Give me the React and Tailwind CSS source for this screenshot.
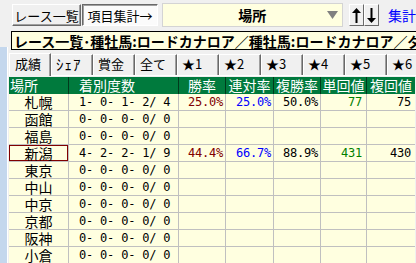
import React from 'react';

const rows = [
  { name: '札幌', rec: '1- 0- 1- 2/ 4', win: '25.0%', ren: '25.0%', fuku: '50.0%', tan: '77', fk: '75' },
  { name: '函館', rec: '0- 0- 0- 0/ 0' },
  { name: '福島', rec: '0- 0- 0- 0/ 0' },
  { name: '新潟', rec: '4- 2- 2- 1/ 9', win: '44.4%', ren: '66.7%', fuku: '88.9%', tan: '431', fk: '430', sel: true },
  { name: '東京', rec: '0- 0- 0- 0/ 0' },
  { name: '中山', rec: '0- 0- 0- 0/ 0' },
  { name: '中京', rec: '0- 0- 0- 0/ 0' },
  { name: '京都', rec: '0- 0- 0- 0/ 0' },
  { name: '阪神', rec: '0- 0- 0- 0/ 0' },
  { name: '小倉', rec: '0- 0- 0- 0/ 0' },
];

const tabs = ['成績', 'ｼｪｱ', '賞金', '全て', '★1', '★2', '★3', '★4', '★5', '★6'];

const mono = "font-['DejaVu_Sans_Mono',monospace] text-[12px] tracking-[-0.2px]";
const cell = 'border-b border-[#c0c0c0] overflow-hidden leading-[16px]';

function Arrow({ up }) {
  return (
    <svg width="9" height="15" viewBox="0 0 9 15">
      {up ? (
        <>
          <polygon points="4.5,0 9,5 0,5" fill="#000" />
          <rect x="3.5" y="4" width="2" height="11" fill="#000" />
        </>
      ) : (
        <>
          <polygon points="4.5,15 9,10 0,10" fill="#000" />
          <rect x="3.5" y="0" width="2" height="11" fill="#000" />
        </>
      )}
    </svg>
  );
}

function App() {
  return (
    <div className="w-[416px] h-[263px] overflow-hidden bg-[#f0f0f0] font-['Noto_Sans_CJK_JP',sans-serif] text-black">
      {/* top toolbar */}
      <div className="flex items-center h-[30px] pl-[12px] whitespace-nowrap">
        <button className="w-[71px] h-[22px] flex items-center justify-center text-[13px] leading-none border border-t-white border-l-white border-b-[#696969] border-r-[#696969] shadow-[inset_-1px_-1px_0_#a0a0a0]">
          レース一覧
        </button>
        <button className="ml-[1px] w-[78px] h-[22px] flex items-center justify-center text-[13px] leading-none bg-[#fbfbfb] border border-t-[#696969] border-l-[#696969] border-b-white border-r-white shadow-[inset_1px_1px_0_#a0a0a0]">
          項目集計→
        </button>
        <div className="ml-[4px] w-[186px] h-[24px] relative flex items-center justify-center bg-[#ffffe0] border border-[#d4d4d4]">
          <span className="text-[14px] font-bold leading-none">場所</span>
          <svg className="absolute right-[4px] top-[7px]" width="11" height="8" viewBox="0 0 11 8">
            <polygon points="0,0 11,0 5.5,8" fill="#808080" />
          </svg>
        </div>
        <button className="ml-[6px] w-[16px] h-[22px] flex items-center justify-center border border-t-white border-l-white border-b-[#696969] border-r-[#696969]">
          <Arrow up />
        </button>
        <button className="w-[15px] h-[22px] flex items-center justify-center border border-t-white border-l-white border-b-[#696969] border-r-[#696969]">
          <Arrow />
        </button>
        <span className="ml-[9px] text-[14px] leading-none text-[#0000ff]">集計</span>
      </div>

      {/* title */}
      <div className="ml-[11px] mt-[1px] h-[19px] flex items-center pl-[2px] bg-[#ffffe0] border border-black border-r-0 whitespace-nowrap overflow-hidden">
        <span className="text-[14px] font-bold leading-none">レース一覧･種牡馬:ロードカナロア／種牡馬:ロードカナロア／ダート</span>
      </div>

      <div className="flex mt-[-3px]">
        <div className="w-[7px] h-[230px] bg-[#c4d7ed]" />
        <div className="w-[2px] bg-[#f0f0f0] border-l border-white" />
        <div className="flex-1 min-w-0">
          {/* tabs */}
          <div className="flex items-end h-[29px] border-b border-white whitespace-nowrap">
            {tabs.map((t, i) => (
              <div
                key={t}
                className={`shrink-0 w-[42px] flex items-center text-[13px] leading-none pb-[3px] border-t border-l border-t-white border-l-white border-r border-r-[#696969] shadow-[inset_-1px_0_0_#a0a0a0] ${i === 0 ? 'h-[23px] pl-[5px] mb-[-1px] bg-[#f0f0f0] relative z-10' : 'h-[21px] pl-[4px]'} ${t === 'ｼｪｱ' ? 'text-[15px] tracking-[1px]' : ''}`}
              >
                {t}
              </div>
            ))}
          </div>

          {/* table */}
          <div className="mt-[1px] w-[406px]">
            <div className="grid grid-cols-[60px_110px_47px_48px_47px_46px_48px] h-[17px] bg-[#007a3d] text-white text-[14px] leading-[17px] whitespace-nowrap">
              <div className="border-r border-[#003a1c] pl-[1px]">場所</div>
              <div className="border-r border-[#003a1c] pl-[10px]">着別度数</div>
              <div className="border-r border-[#003a1c] text-center">勝率</div>
              <div className="border-r border-[#003a1c] text-center">連対率</div>
              <div className="border-r border-[#003a1c] text-center">複勝率</div>
              <div className="border-r border-[#003a1c] text-center">単回値</div>
              <div className="text-center">複回値</div>
            </div>
            {rows.map((r) => (
              <div key={r.name} className="grid grid-cols-[60px_110px_47px_48px_47px_46px_48px] h-[17px] bg-[#ffffe0] whitespace-pre">
                <div className={`${cell} border-r text-center text-[14px] ${r.sel ? 'shadow-[inset_0_0_0_1px_#800000]' : ''}`}>{r.name}</div>
                <div className={`${cell} border-r pl-[10px] ${mono}`}>{r.rec}</div>
                <div className={`${cell} border-r text-right pr-[2px] text-[#800000] ${mono}`}>{r.win || ''}</div>
                <div className={`${cell} border-r text-right pr-[2px] text-[#0000ff] ${mono}`}>{r.ren || ''}</div>
                <div className={`${cell} border-r text-right pr-[2px] ${mono}`}>{r.fuku || ''}</div>
                <div className={`${cell} border-r text-right pr-[4px] text-[#008000] ${mono}`}>{r.tan || ''}</div>
                <div className={`${cell} text-right pr-[4px] ${mono}`}>{r.fk || ''}</div>
              </div>
            ))}
          </div>
        </div>
      </div>
    </div>
  );
}

export default App;
